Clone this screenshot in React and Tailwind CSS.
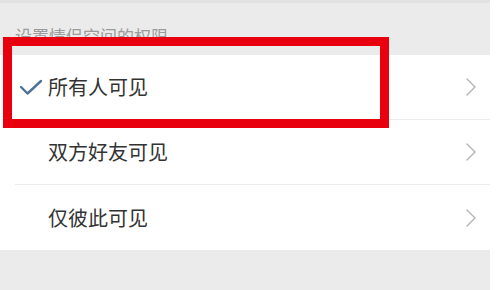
const rows = [
  { label: "所有人可见", checked: true },
  { label: "双方好友可见" },
  { label: "仅彼此可见" },
];

function Chevron() {
  return (
    <svg width="12" height="20" viewBox="0 0 12 20" fill="none">
      <polyline points="2,2 10,10 2,18" stroke="#b4b4b4" strokeWidth="1.4" strokeLinecap="round" strokeLinejoin="round" />
    </svg>
  );
}

function Check() {
  return (
    <svg width="24" height="17" viewBox="0 0 24 17" fill="none">
      <polyline points="2,8 8.5,14.5 22,2" stroke="#4f7397" strokeWidth="2.4" strokeLinecap="round" strokeLinejoin="round" />
    </svg>
  );
}

export default function App() {
  return (
    <div className="relative w-[501px] h-[290px] bg-white flex overflow-hidden" style={{ fontFamily: '"Noto Sans CJK SC", "Noto Sans", sans-serif' }}>
      <div className="w-[490px] h-full bg-[#ebebeb] flex flex-col border-t-[3px] border-[#e2e2e2]">
        <div className="h-[52px] pl-[15px] pt-[24px]">
          <p className="text-[17px] leading-none text-[#9b9b9b]">设置情侣空间的权限</p>
        </div>
        <div className="bg-white">
          {rows.map((r, i) => (
            <div key={r.label} className="pl-[15px]">
              <div className={`h-[65px] flex items-center pr-[13px] ${i < rows.length - 1 ? "border-b border-[#ececec]" : ""}`}>
                <div className="w-[33px] flex items-center pl-[4px]">{r.checked && <Check />}</div>
                <span className="flex-1 text-[20px] leading-none text-[#333333]">{r.label}</span>
                <Chevron />
              </div>
            </div>
          ))}
        </div>
      </div>
      <div className="absolute left-[3px] top-[37px] w-[386px] h-[91px] border-[9px] border-[#e8000e]" />
    </div>
  );
}
